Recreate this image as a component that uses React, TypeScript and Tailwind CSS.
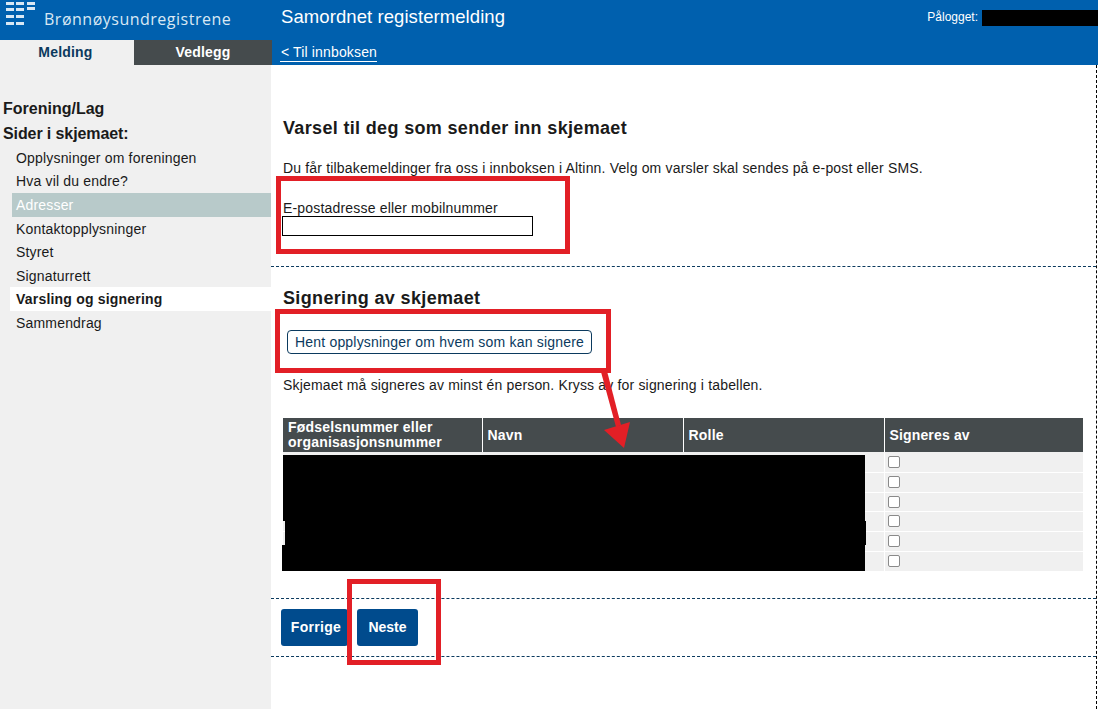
const menu = [
  { label: 'Opplysninger om foreningen', h: 'h-6' },
  { label: 'Hva vil du endre?', h: 'h-[23px]' },
];

const Logo = () => (
  <svg width="36" height="26" viewBox="0 0 36 26" fill="#d9e8f4" className="shrink-0">
    <rect x="6" y="2" width="8" height="3" />
    <rect x="16" y="2" width="8" height="3" />
    <rect x="27" y="2" width="8" height="3" />
    <rect x="6" y="8" width="8" height="3" />
    <rect x="16" y="8" width="8" height="3" />
    <rect x="27" y="7" width="8" height="3" />
    <rect x="6" y="15" width="8" height="3" />
    <rect x="16" y="15" width="8" height="3" />
    <rect x="6" y="22" width="8" height="3" />
    <rect x="16" y="22" width="8" height="3" />
  </svg>
);

export default function App() {
  return (
    <div className="relative h-[709px] w-[1098px] overflow-hidden bg-white font-['Liberation_Sans',Arial,sans-serif] text-[14px] text-[#1a1a1a]">
      {/* header */}
      <header className="flex h-[65px] bg-[#0060ae] text-white">
        <div className="flex w-[272px] shrink-0 flex-col">
          <div className="flex h-10 items-start">
            <Logo />
            <span className="ml-2 mt-[10px] font-['Open_Sans',sans-serif] text-[16px] leading-[19px] tracking-[0.5px] text-[#d9e8f4]">
              Brønnøysundregistrene
            </span>
          </div>
          <div className="flex h-[25px] text-[14px] font-bold tracking-[0.2px]">
            <div className="flex w-[134px] items-center justify-center bg-[#f0f0f0] pr-[3px] text-[#0b3a5e]">Melding</div>
            <div className="flex flex-1 items-center justify-center bg-[#454b4d] text-white">Vedlegg</div>
          </div>
        </div>
        <div className="flex min-w-0 flex-1 flex-col">
          <div className="flex h-10 items-start justify-between">
            <div className="ml-[9px] mt-[6px] text-[18.5px] leading-[21px] tracking-[0.08px]">Samordnet registermelding</div>
            <div className="mt-[10px] flex items-start">
              <span className="text-[12px] leading-[15px]">Pålogget:</span>
              <span className="ml-[4px] h-[16px] w-[116px] bg-black" />
            </div>
          </div>
          <div className="ml-2 mt-[3px] w-fit border-b border-white pl-px text-[14px] leading-[18px] tracking-[0.15px]">&lt; Til innboksen</div>
        </div>
      </header>

      <div className="flex h-[644px]">
        {/* sidebar */}
        <aside className="w-[271px] shrink-0 overflow-hidden bg-[#f0f0f0] pt-[34px]">
          <h2 className="ml-[3px] text-[16px] font-bold leading-[19px]">Forening/Lag</h2>
          <h3 className="ml-[3px] mt-[6px] text-[16px] font-bold leading-[19px] tracking-[-0.1px]">Sider i skjemaet:</h3>
          <ul className="mt-[3px] text-[14px] tracking-[0.18px]">
            {menu.map(m => (
              <li key={m.label} className={`flex ${m.h} items-center pl-4`}>{m.label}</li>
            ))}
            <li className="ml-3 flex h-6 items-center bg-[#b8caca] pl-1 text-white">Adresser</li>
            <li className="flex h-6 items-center pl-4">Kontaktopplysninger</li>
            <li className="flex h-[23px] items-center pl-4">Styret</li>
            <li className="flex h-[23px] items-center pl-4 pt-px">Signaturrett</li>
            <li className="ml-[10px] flex h-6 items-center bg-white pl-[6px] font-bold tracking-[0.2px]">Varsling og signering</li>
            <li className="flex h-6 items-center pl-4">Sammendrag</li>
          </ul>
        </aside>

        {/* main form */}
        <main className="mr-px min-w-0 flex-1 border-r border-dashed border-black">
          <section className="h-[202px] border-b border-dashed border-[#0b3a5e] pl-3 pt-[53px]">
            <h2 className="text-[18px] font-bold leading-[21px] tracking-[0.34px]">Varsel til deg som sender inn skjemaet</h2>
            <p className="mt-[20px] leading-[18px] tracking-[0.17px]">Du får tilbakemeldinger fra oss i innboksen i Altinn. Velg om varsler skal sendes på e-post eller SMS.</p>
            <label className="mt-[23px] block text-[14px] leading-[16px] tracking-[0.18px]">E-postadresse eller mobilnummer</label>
            <input className="block h-5 w-[251px] -translate-x-px border border-black bg-white" />
          </section>

          <section className="h-[332px] border-b border-dashed border-[#0b3a5e] pl-3 pt-[21px]">
            <h2 className="text-[18px] font-bold leading-[21px] tracking-[0.35px]">Signering av skjemaet</h2>
            <button className="ml-1 mt-[21px] flex h-6 w-[305px] items-center justify-center rounded-[4px] border border-[#0b3a5e] bg-white text-[14px] tracking-[0.2px] text-[#0b3a5e]">
              Hent opplysninger om hvem som kan signere
            </button>
            <p className="mt-[22px] leading-[18px] tracking-[0.17px]">Skjemaet må signeres av minst én person. Kryss av for signering i tabellen.</p>
            <table className="mt-[24px] w-[800px] table-fixed border-collapse text-[14px]">
              <colgroup>
                <col className="w-[199px]" />
                <col className="w-[201px]" />
                <col className="w-[201px]" />
                <col className="w-[199px]" />
              </colgroup>
              <thead>
                <tr className="h-[34px] bg-[#454b4d] text-left font-bold text-white">
                  <th className="border-r border-white pl-[5px] leading-[15px] tracking-[0.2px]">Fødselsnummer eller organisasjonsnummer</th>
                  <th className="border-r border-white pl-[5px] tracking-[0.2px]">Navn</th>
                  <th className="border-r border-white pl-[5px] tracking-[0.2px]">Rolle</th>
                  <th className="pl-[5px] tracking-[0.15px]">Signeres av</th>
                </tr>
              </thead>
              <tbody>
                {[0, 1, 2, 3, 4, 5].map(i => (
                  <tr key={i} className={i === 2 ? 'h-[19px] border-b border-white bg-[#f0f0f0]' : 'h-5 border-b border-white bg-[#f0f0f0]'}>
                    <td />
                    <td />
                    <td />
                    <td className="border-l border-white pl-[3px]">
                      <input type="checkbox" className="block h-3 w-3 appearance-none rounded-[2px] border border-[#8a8a8a] bg-white" />
                    </td>
                  </tr>
                ))}
              </tbody>
            </table>
          </section>

          <section className="flex h-[58px] items-start gap-[9px] border-b border-dashed border-[#0b3a5e] pl-[10px] pt-[10px]">
            <button className="flex h-[37px] w-[67px] items-center justify-center rounded-[3px] bg-[#004b8d] pl-[3px] text-[14px] font-bold tracking-[0.3px] text-white">Forrige</button>
            <button className="flex h-[37px] w-[61px] items-center justify-center rounded-[3px] bg-[#004b8d] text-[14px] font-bold text-white">Neste</button>
          </section>
        </main>
      </div>

      {/* redactions and red annotation boxes drawn on top of the form */}
      <div className="absolute left-[283px] top-[455px] h-[66px] w-[582px] bg-black" />
      <div className="absolute left-[285px] top-[521px] h-[24px] w-[581px] bg-black" />
      <div className="absolute left-[282px] top-[545px] h-[26px] w-[583px] bg-black" />
      <div className="absolute left-[276px] top-[176px] h-[78px] w-[294px] border-[5px] border-[#e21f26]" />
      <div className="absolute left-[275px] top-[309px] h-[64px] w-[336px] border-[5px] border-[#e21f26]" />
      <div className="absolute left-[347px] top-[579px] h-[86px] w-[94px] border-[5px] border-[#e21f26]" />
      <svg className="absolute left-[590px] top-[370px] overflow-visible" width="50" height="80" viewBox="0 0 50 80" fill="#e21f26">
        <path d="M11 2 L17 1 L31 55 L26 57 Z" />
        <path d="M14 60 L40 52 L34 78 Z" />
      </svg>
    </div>
  );
}
